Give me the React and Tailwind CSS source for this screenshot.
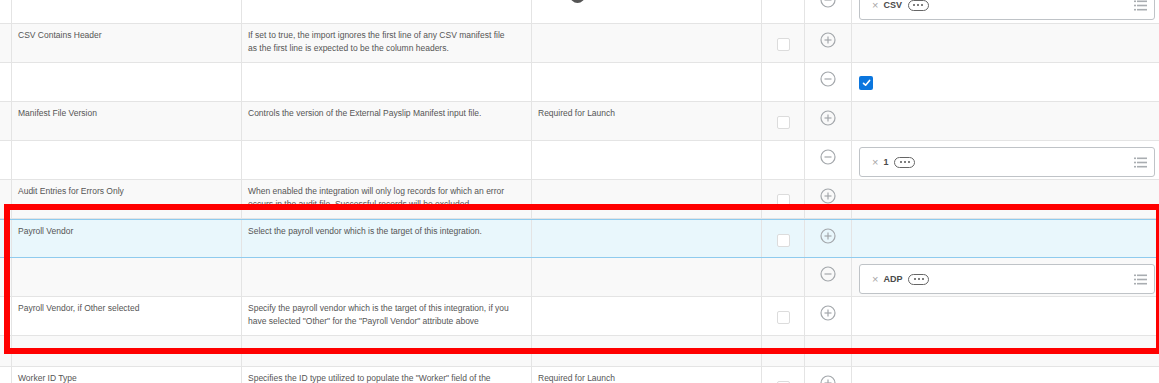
import React from "react";

const rows = [
  { kind: "value", h: 40, chip: "CSV", dark: true },
  {
    kind: "attr",
    name: "CSV Contains Header",
    desc: [
      "If set to true, the import ignores the first line of any CSV manifest file",
      "as the first line is expected to be the column headers.",
    ],
  },
  { kind: "value", check: true },
  {
    kind: "attr",
    name: "Manifest File Version",
    desc: ["Controls the version of the External Payslip Manifest input file."],
    req: "Required for Launch",
  },
  { kind: "value", chip: "1" },
  {
    kind: "attr",
    name: "Audit Entries for Errors Only",
    desc: [
      "When enabled the integration will only log records for which an error",
      "occurs in the audit file. Successful records will be excluded.",
    ],
  },
  {
    kind: "attr",
    name: "Payroll Vendor",
    desc: ["Select the payroll vendor which is the target of this integration."],
    selected: true,
  },
  { kind: "value", chip: "ADP" },
  {
    kind: "attr",
    name: "Payroll Vendor, if Other selected",
    desc: [
      "Specify the payroll vendor which is the target of this integration, if you",
      'have selected "Other" for the "Payroll Vendor" attribute above',
    ],
  },
  { kind: "value", h: 31 },
  {
    kind: "attr",
    name: "Worker ID Type",
    desc: [
      'Specifies the ID type utilized to populate the "Worker" field of the',
      "output file.",
    ],
    req: "Required for Launch",
  },
];

function CircleIcon({ minus }) {
  return (
    <svg width="16" height="16" viewBox="0 0 16 16" fill="none">
      <circle cx="8" cy="8" r="7" stroke="#a3a7ab" strokeWidth="1.2" />
      <line x1="4.5" y1="8" x2="11.5" y2="8" stroke="#a3a7ab" strokeWidth="1.2" />
      {!minus && <line x1="8" y1="4.5" x2="8" y2="11.5" stroke="#a3a7ab" strokeWidth="1.2" />}
    </svg>
  );
}

function ListIcon() {
  return (
    <svg width="13" height="11" viewBox="0 0 13 11" fill="#a9adb1">
      <rect x="0" y="0.5" width="2" height="1.6" />
      <rect x="3" y="0.5" width="10" height="1.6" />
      <rect x="0" y="4.7" width="2" height="1.6" />
      <rect x="3" y="4.7" width="10" height="1.6" />
      <rect x="0" y="8.9" width="2" height="1.6" />
      <rect x="3" y="8.9" width="10" height="1.6" />
    </svg>
  );
}

function Chip({ label }) {
  return (
    <div className="mt-[6px] flex h-[30px] items-center rounded-[3px] border border-[#bfc3c7] bg-white pl-[12px] pr-[7px]">
      <span className="text-[11px] leading-none text-[#a7a7a7]">×</span>
      <span className="ml-[5px] text-[9px] font-semibold text-[#4a4a4a]">{label}</span>
      <span className="ml-[6px] flex h-[11px] w-[21px] items-center justify-center gap-[2px] rounded-full border border-[#666]">
        <span className="h-[2px] w-[2px] rounded-full bg-[#555]" />
        <span className="h-[2px] w-[2px] rounded-full bg-[#555]" />
        <span className="h-[2px] w-[2px] rounded-full bg-[#555]" />
      </span>
      <span className="ml-auto">
        <ListIcon />
      </span>
    </div>
  );
}

function Row({ row, index }) {
  const zebra = index % 2 === 1 ? "bg-[#f9f9f9]" : "bg-white";
  const bg = row.selected ? "bg-[#e9f7fc]" : zebra;
  const border = row.selected ? "border-y border-[#8fcbee]" : "border-b border-[#e4e4e4]";
  const height = row.h === 40 ? "h-[40px]" : row.h === 31 ? "h-[31px]" : "h-[39px]";
  const cell = "border-r border-[#e4e4e4]";

  return (
    <div className={`flex box-border overflow-hidden ${height} ${bg} ${border}`}>
      <div className={`w-[12px] shrink-0 ${cell}`} />
      <div className={`w-[230px] shrink-0 px-[6px] pt-[5px] ${cell}`}>
        {row.name}
      </div>
      <div className={`w-[290px] shrink-0 whitespace-nowrap pl-[6px] pt-[5px] ${cell}`}>
        {row.desc &&
          row.desc.map((line, i) => (
            <div key={i}>{line}</div>
          ))}
      </div>
      <div className={`relative w-[230px] shrink-0 px-[6px] pt-[5px] ${cell}`}>
        {row.req}
        {row.dark && (
          <span className="absolute left-[38px] top-[4px] h-[15px] w-[15px] rounded-full bg-[#555]" />
        )}
      </div>
      <div className={`flex w-[43px] shrink-0 justify-center pt-[14px] ${cell}`}>
        {row.kind === "attr" && (
          <span className="h-[13px] w-[13px] rounded-[2px] border border-[#dcdcdc] bg-white" />
        )}
      </div>
      <div className={`flex w-[47px] shrink-0 justify-center pt-[8px] ${cell}`}>
        {row.h !== 31 && <CircleIcon minus={row.kind === "value"} />}
      </div>
      <div className="flex-1 pl-[7px] pr-[4px]">
        {row.chip && <Chip label={row.chip} />}
        {row.check && (
          <div className="mt-[13px] flex h-[14px] w-[14px] items-center justify-center rounded-[2px] bg-[#0b76de]">
            <svg width="9" height="8" viewBox="0 0 9 8" fill="none">
              <path d="M1.5 4.3 L3.6 6.2 L7.6 1.4" stroke="white" strokeWidth="1.6" strokeLinecap="round" strokeLinejoin="round" />
            </svg>
          </div>
        )}
      </div>
    </div>
  );
}

export default function App() {
  return (
    <div className="relative h-[383px] w-[1159px] overflow-hidden bg-white font-['Liberation_Sans',Arial,sans-serif] text-[8.5px] leading-[13px] text-[#555]">
      <div className="-mt-[16px]">
        {rows.map((row, i) => (
          <Row key={i} row={row} index={i} />
        ))}
      </div>
      <div className="absolute left-[4px] top-[204px] h-[150px] w-[1155px] border-[6px] border-r-[3px] border-[#ff0000]" />
    </div>
  );
}
